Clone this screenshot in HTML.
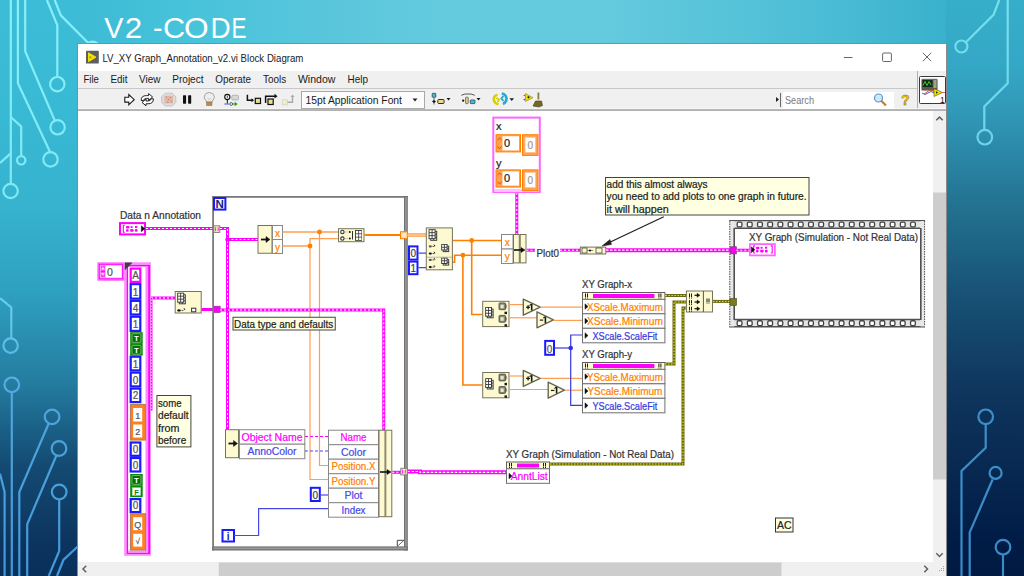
<!DOCTYPE html>
<html><head><meta charset="utf-8">
<style>
html,body{margin:0;padding:0;width:1024px;height:576px;overflow:hidden;background:#0c3460;}
svg{display:block;font-family:"Liberation Sans",sans-serif;}
</style></head>
<body>
<svg width="1024" height="576" viewBox="0 0 1024 576">
<defs>
<linearGradient id="gTop" x1="78" y1="0" x2="946" y2="0" gradientUnits="userSpaceOnUse">
<stop offset="0" stop-color="rgb(61,187,213)"/>
<stop offset="0.12" stop-color="rgb(70,195,218)"/>
<stop offset="0.294" stop-color="rgb(90,198,220)"/>
<stop offset="0.432" stop-color="rgb(100,203,222)"/>
<stop offset="0.605" stop-color="rgb(100,202,222)"/>
<stop offset="0.778" stop-color="rgb(84,194,216)"/>
<stop offset="0.893" stop-color="rgb(72,186,212)"/>
<stop offset="1" stop-color="rgb(57,177,204)"/>
</linearGradient>
<linearGradient id="gLeft" x1="0" y1="0" x2="0" y2="576" gradientUnits="userSpaceOnUse">
<stop offset="0" stop-color="rgb(60,188,215)"/>
<stop offset="0.1875" stop-color="rgb(56,185,212)"/>
<stop offset="0.365" stop-color="rgb(54,178,206)"/>
<stop offset="0.509" stop-color="rgb(46,160,192)"/>
<stop offset="0.665" stop-color="rgb(36,124,160)"/>
<stop offset="0.804" stop-color="rgb(20,75,115)"/>
<stop offset="0.943" stop-color="rgb(12,52,94)"/>
<stop offset="1" stop-color="rgb(10,48,90)"/>
</linearGradient>
<linearGradient id="gRight" x1="0" y1="0" x2="0" y2="576" gradientUnits="userSpaceOnUse">
<stop offset="0" stop-color="rgb(54,174,202)"/>
<stop offset="0.11" stop-color="rgb(52,168,198)"/>
<stop offset="0.214" stop-color="rgb(48,148,180)"/>
<stop offset="0.352" stop-color="rgb(35,115,145)"/>
<stop offset="0.509" stop-color="rgb(24,82,118)"/>
<stop offset="0.665" stop-color="rgb(16,55,95)"/>
<stop offset="0.943" stop-color="rgb(0,28,70)"/>
<stop offset="1" stop-color="rgb(0,26,66)"/>
</linearGradient>
<linearGradient id="gLineL" x1="0" y1="0" x2="0" y2="576" gradientUnits="userSpaceOnUse">
<stop offset="0" stop-color="rgb(135,240,250)"/>
<stop offset="0.35" stop-color="rgb(125,232,245)"/>
<stop offset="0.55" stop-color="rgb(100,200,235)"/>
<stop offset="0.7" stop-color="rgb(80,165,222)"/>
<stop offset="1" stop-color="rgb(66,152,215)"/>
</linearGradient>
<linearGradient id="gLineR" x1="0" y1="0" x2="0" y2="576" gradientUnits="userSpaceOnUse">
<stop offset="0" stop-color="rgb(118,224,238)"/>
<stop offset="0.3" stop-color="rgb(105,210,232)"/>
<stop offset="0.7" stop-color="rgb(62,142,200)"/>
<stop offset="1" stop-color="rgb(58,138,198)"/>
</linearGradient>
<pattern id="pinkW" width="4" height="4" patternUnits="userSpaceOnUse">
<rect width="4" height="4" fill="#ff00ff"/>
</pattern>
</defs>

<!-- background -->
<rect x="940" y="0" width="84" height="576" fill="url(#gRight)"/>
<rect x="0" y="0" width="82" height="576" fill="url(#gLeft)"/>
<rect x="78" y="0" width="868" height="50" fill="url(#gTop)"/>

<!-- circuit lines left -->
<g fill="none" stroke="url(#gLineL)" stroke-width="2.2">
<path d="M10.8,0 V183.7"/>
<circle cx="10.6" cy="191" r="7.2"/>
<path d="M17.9,0 V83.3 L50.3,152.5"/>
<circle cx="50.5" cy="159.4" r="7.2"/>
<path d="M25.2,0 V51.2 L54.7,120.4"/>
<circle cx="57.6" cy="127.3" r="7.2"/>
<path d="M46.9,0 L57.3,25.2 V77"/>
<circle cx="57.3" cy="84.2" r="7.2"/>
<path d="M54.7,0 L60.8,15.3 L87.8,42.5"/>
<circle cx="92.6" cy="48.6" r="7"/>
<path d="M10.8,117 L21.2,126.5 V156"/>
<circle cx="21.2" cy="160.3" r="4.2"/>
<path d="M10.8,153.4 L0,163"/>
<path d="M0,298.2 L11.3,307.4 V338.3"/>
<circle cx="10.6" cy="345.6" r="7.2"/>
<circle cx="11.8" cy="384.8" r="7.3"/>
<path d="M11.8,392 V576"/>
<circle cx="52.1" cy="416.9" r="7.3"/>
<path d="M48.6,423.8 L19.3,492 V576"/>
<circle cx="59" cy="448.5" r="7.3"/>
<path d="M56.4,455.5 L27.2,524.2 V576"/>
<path d="M0,473.7 L4.6,492 V576"/>
<circle cx="59.2" cy="492" r="7.3"/>
<path d="M59.2,499.3 V551 L48.7,576"/>
<path d="M78,546.3 L63.4,560 L57,576"/>
</g>
<!-- circuit lines right -->
<g fill="none" stroke="url(#gLineR)" stroke-width="2.2">
<path d="M999.2,0 L993.5,14.8 L965.7,42.5"/>
<circle cx="961.4" cy="46.5" r="6"/>
<path d="M1007.7,0 V83.3 L984.3,106.5 V130"/>
<circle cx="984.8" cy="137.2" r="7.3"/>
<circle cx="985.7" cy="416.8" r="7.3"/>
<path d="M985.7,424.1 V447.7 L961.5,471 V576"/>
<circle cx="995.6" cy="472.9" r="6"/>
<path d="M992.6,479.5 L969.7,532.4 V576"/>
<circle cx="1003" cy="547.2" r="7.3"/>
<path d="M1003,554.5 V576"/>
</g>

<!-- title -->
<g fill="#ffffff" font-size="30">
<text transform="translate(104.17,37.8) scale(0.958,1)">V</text>
<text transform="translate(124.81,37.8) scale(1.045,1)">2</text>
<text transform="translate(152.97,37.8) scale(0.957,1)">-</text>
<text transform="translate(162.94,37.8) scale(1.020,1)">C</text>
<text transform="translate(184.09,37.8) scale(1.056,1)">O</text>
<text transform="translate(210.44,37.8) scale(0.930,1)">D</text>
<text transform="translate(231.40,37.8) scale(0.750,1)">E</text>
</g>

<!-- window -->
<rect x="77" y="44" width="870" height="532" fill="#ffffff"/>
<rect x="77.5" y="43.5" width="869" height="540" fill="none" stroke="#8a8a8a" stroke-width="1"/>
<!-- title bar -->
<rect x="86" y="50.8" width="12.8" height="12.8" rx="0.6" fill="#5e5e5e"/>
<path d="M88.5,52.8 L96,57.2 L88.5,61.6 Z" fill="#f4e000" stroke="#f4e000" stroke-width="1" stroke-linejoin="round"/>
<path d="M89.6,56 L91.6,57.2 L89.6,58.6Z" fill="#7a7a50"/>
<text x="102.4" y="62" font-size="11" fill="#1a1a1a" textLength="201" lengthAdjust="spacingAndGlyphs">LV_XY Graph_Annotation_v2.vi Block Diagram</text>
<path d="M844,57.5 H852.5" stroke="#555" stroke-width="0.9"/>
<rect x="882.6" y="53" width="8.8" height="8.5" rx="1" fill="none" stroke="#555" stroke-width="0.9"/>
<path d="M922.8,52.8 L931.2,61.2 M931.2,52.8 L922.8,61.2" stroke="#555" stroke-width="0.9"/>
<!-- menu bar -->
<rect x="78" y="71" width="868" height="17" fill="#f0f0f0"/>
<g font-size="11" fill="#1a1a1a">
<text x="83.4" y="83" textLength="15.5" lengthAdjust="spacingAndGlyphs">File</text>
<text x="110.4" y="83" textLength="17" lengthAdjust="spacingAndGlyphs">Edit</text>
<text x="139.1" y="83" textLength="21.4" lengthAdjust="spacingAndGlyphs">View</text>
<text x="172.2" y="83" textLength="31.4" lengthAdjust="spacingAndGlyphs">Project</text>
<text x="215.3" y="83" textLength="35.7" lengthAdjust="spacingAndGlyphs">Operate</text>
<text x="263" y="83" textLength="23.2" lengthAdjust="spacingAndGlyphs">Tools</text>
<text x="297.9" y="83" textLength="37.5" lengthAdjust="spacingAndGlyphs">Window</text>
<text x="347.5" y="83" textLength="20.5" lengthAdjust="spacingAndGlyphs">Help</text>
</g>
<!-- toolbar -->
<rect x="78" y="88" width="840" height="22" fill="#f0f0f0"/>
<path d="M78,88.5 H918" stroke="#c8c8c8"/>
<rect x="918" y="71" width="28" height="39" fill="#f0f0f0"/>
<path d="M917.5,71 V110" stroke="#b0b0b0"/>
<rect x="78" y="108" width="868" height="1" fill="#f6f6f6"/>
<rect x="78" y="109.1" width="868" height="1.9" fill="#b2b2b2"/>


<!-- toolbar icons -->
<g>
<path d="M124.8,97.3 H128.8 V94.6 L134.2,99.7 L128.8,104.8 V102.1 H124.8 Z" fill="#fff" stroke="#1a1a1a" stroke-width="1.1" stroke-linejoin="miter"/>
<path d="M141.2,100.5 Q141,95.6 146.5,95.6 H148.6 V93.6 L152.6,97 L148.6,100.4 V98.4 H146.6 Q143.8,98.4 143.6,100.5 Z" fill="#fff" stroke="#1a1a1a" stroke-width="0.95" stroke-linejoin="round"/>
<path d="M153.4,98.8 Q153.6,103.8 148,103.8 H146 V105.8 L142,102.4 L146,99 V101 H148 Q150.8,101 151,98.8 Z" fill="#fff" stroke="#1a1a1a" stroke-width="0.95" stroke-linejoin="round"/>
<path d="M165.3,93.2 H172.2 L175.8,96.8 V102.4 L172.2,106 H165.3 L161.7,102.4 V96.8 Z" fill="#dcdcdc" stroke="#c4c4c4" stroke-width="1"/>
<rect x="164.5" y="95.8" width="8.6" height="7.6" fill="#e0b8a0"/>
<g fill="#e050e0"><circle cx="166.5" cy="97" r="0.6"/><circle cx="170.5" cy="97.5" r="0.6"/><circle cx="168.5" cy="99.6" r="0.6"/><circle cx="171.3" cy="101.6" r="0.6"/><circle cx="167.8" cy="102.3" r="0.6"/></g>
<rect x="183" y="95.2" width="3.1" height="8.5" rx="0.6" fill="#111"/>
<rect x="188.1" y="95.2" width="3.1" height="8.5" rx="0.6" fill="#111"/>
<path d="M206.3,101 Q204,99 204.3,96.3 Q205,92.6 209.3,92.5 Q213.6,92.6 214.3,96.3 Q214.6,99 212.3,101 V102 H206.3 Z" fill="#eeeeee" stroke="#9a9a9a" stroke-width="0.9"/>
<path d="M207.5,98 L209.3,100 L211,98" stroke="#b0b0b0" stroke-width="0.6" fill="none"/>
<rect x="206.6" y="102" width="5.4" height="3.6" fill="#b88a58" stroke="#8a6a40" stroke-width="0.5"/>
<circle cx="227.3" cy="97" r="2.6" fill="#fff" stroke="#111" stroke-width="1.1"/>
<path d="M227.3,95.6 V98.2" stroke="#111" stroke-width="0.8"/>
<rect x="231.8" y="95.3" width="6.6" height="4.6" rx="0.8" fill="#d8d8d8" stroke="#a0a0a0" stroke-width="0.7"/>
<path d="M227.3,99.6 V103.6" stroke="#111" stroke-width="1"/>
<path d="M224.3,104 H229" stroke="#3a5ae8" stroke-width="1"/>
<circle cx="231.2" cy="104" r="1.4" fill="#fff" stroke="#333" stroke-width="0.8"/>
<path d="M234.7,101.8 L237.6,104 L234.7,106.2Z" fill="#1aa01a"/>
<path d="M233,104 H235" stroke="#1aa01a" stroke-width="1"/>
<path d="M247.4,94.8 V100.3 H252.8" stroke="#111" stroke-width="1.5" fill="none"/>
<path d="M251.5,98.3 L254,100.3 L251.5,102.3Z" fill="#111"/>
<rect x="255.3" y="98.3" width="5.2" height="5.2" fill="#e8e090" stroke="#111" stroke-width="1.2"/>
<path d="M265.6,103 V96.2 H275" stroke="#111" stroke-width="1.5" fill="none"/>
<path d="M274.5,93.8 L277.5,96.2 L274.5,98.6Z" fill="#111"/>
<rect x="268" y="99" width="5.2" height="5.5" fill="#e8e090" stroke="#111" stroke-width="1.2"/>
<rect x="282.3" y="99.8" width="5" height="5" fill="#eeeed0" stroke="#d4d4b8" stroke-width="0.8"/>
<path d="M287.6,102.3 H292.5 V96.3" stroke="#a8a8a8" stroke-width="1.4" fill="none"/>
<path d="M290.5,97 L292.5,94.5 L294.5,97Z" fill="#a8a8a8"/>
</g>
<!-- font dropdown -->
<rect x="301.5" y="91.5" width="123" height="17" fill="#fcfcfc" stroke="#a8a8a8"/>
<text x="305.5" y="104" font-size="11" fill="#1a1a1a" textLength="96.5" lengthAdjust="spacingAndGlyphs">15pt Application Font</text>
<path d="M412.5,98.5 L417.5,98.5 L415,101.5Z" fill="#222"/>
<!-- align etc -->
<g>
<rect x="432.2" y="93.3" width="3.6" height="4" rx="0.6" fill="#30c0e8" stroke="#404040" stroke-width="0.8"/>
<path d="M434,98 V104.5" stroke="#222" stroke-width="0.7"/>
<path d="M432,101.5 L434,100 L436,101.5 L434,103Z" fill="#111"/>
<rect x="437.8" y="99.5" width="6.3" height="4" rx="1" fill="#e8dc90" stroke="#2a2a2a" stroke-width="1"/>
<path d="M446.5,98 L450.5,98 L448.5,100.5Z" fill="#1a1a1a"/>
<path d="M461.3,95.3 Q465,93.5 468,94 Q471,93.5 474.8,95.3" stroke="#444" stroke-width="0.9" fill="none"/>
<circle cx="463.2" cy="100.7" r="1.1" fill="#111"/>
<rect x="465.6" y="97.2" width="2.6" height="6.4" rx="0.6" fill="#e8dc80" stroke="#555" stroke-width="0.8"/>
<rect x="470.3" y="100" width="4.7" height="3.6" rx="0.6" fill="#30c0e8" stroke="#404040" stroke-width="0.8"/>
<path d="M476.5,98 L480.5,98 L478.5,100.5Z" fill="#1a1a1a"/>
<path d="M497.5,94.8 Q493.5,96 493.8,99.5 Q494.2,103.5 498.5,104.2" stroke="#d8d000" stroke-width="2.6" fill="none"/>
<path d="M496.5,97.8 L499,100 L497.5,102" stroke="#d8d000" stroke-width="1.8" fill="none"/>
<path d="M501.8,93.5 Q506.2,94.5 506.5,98.5 Q506.5,102.5 503,104" stroke="#2aa8d0" stroke-width="2.6" fill="none"/>
<path d="M503.5,96 L501.3,98.5 L503.5,101" stroke="#2aa8d0" stroke-width="1.8" fill="none"/>
<path d="M509.5,98.3 L514,98.3 L511.75,101Z" fill="#1a1a1a"/>
<path d="M525.5,93.5 L533,97.7 L525.5,101.5Z" fill="#e8dc10" stroke="#908800" stroke-width="0.6"/>
<circle cx="528.5" cy="97.3" r="1" fill="#111"/>
<circle cx="524.3" cy="95.5" r="0.8" fill="#e04020"/>
<circle cx="524.3" cy="99.6" r="0.8" fill="#4040e0"/>
<rect x="537.5" y="92.5" width="1.8" height="7" fill="#908040"/>
<path d="M533,106 L535.5,101 L541.5,101 L542.5,105.5 L539,107 Z" fill="#706a20" stroke="#4a3a20" stroke-width="0.6"/>
</g>
<!-- search -->
<path d="M776,97 L779,99.5 L776,102Z" fill="#222"/>
<path d="M780.5,93 V107" stroke="#666" stroke-width="1"/>
<rect x="783" y="92" width="111" height="17" fill="#ffffff"/>
<text x="785" y="104" font-size="11" fill="#7a7a7a" textLength="29" lengthAdjust="spacingAndGlyphs">Search</text>
<circle cx="878.5" cy="98" r="4" fill="#cfe8f8" stroke="#5a9ac8" stroke-width="1.2"/>
<path d="M881,100.5 L886,105.5" stroke="#c08030" stroke-width="2.2"/>
<text x="901" y="105" font-size="14" font-weight="bold" fill="#e8d000" stroke="#806000" stroke-width="0.4">?</text>
<!-- vi icon -->
<rect x="919.5" y="76.5" width="26" height="27" rx="1" fill="#ffffff" stroke="#3a3a3a" stroke-width="1"/>
<rect x="921.5" y="79" width="16" height="11.5" rx="1" fill="#5a5a50" stroke="#9a9a90" stroke-width="0.6"/>
<rect x="922.5" y="80" width="10" height="7" fill="#1a2a1a"/>
<path d="M923,85.5 L925,81.5 L927,85.5 L929,81.5 L931,85" stroke="#30e030" stroke-width="0.9" fill="none"/>
<rect x="933.5" y="80" width="3" height="8" fill="#a0a090"/>
<path d="M922,93 Q925,96 928,93 T934,93" stroke="#3050c0" stroke-width="0.9" fill="none"/>
<path d="M924,94 L930,90 L936,92" stroke="#e04020" stroke-width="0.9" fill="none"/>
<path d="M934,88.5 L942.5,92.5 L934,96.5Z" fill="#f0e000" stroke="#505000" stroke-width="0.6"/>
<path d="M936,91.2 L938,92.5 L936,93.8Z" fill="#222"/>
<path d="M942,92.5 H945" stroke="#e04040" stroke-width="0.8"/>
<text x="940" y="102.5" font-size="8.5" fill="#111">1</text>

<!-- vertical scrollbar -->
<rect x="933" y="111" width="13" height="451" fill="#f0f0f0"/>
<rect x="933" y="192.5" width="13" height="287" fill="#cdcdcd"/>
<path d="M936.3,120.3 L939.5,117.1 L942.7,120.3" stroke="#606060" stroke-width="1.5" fill="none"/>
<path d="M936.3,553.3 L939.5,556.5 L942.7,553.3" stroke="#606060" stroke-width="1.5" fill="none"/>
<!-- horizontal scrollbar -->
<rect x="78" y="562" width="868" height="14" fill="#f0f0f0"/>
<rect x="218.75" y="562.5" width="562.75" height="13.5" fill="#cdcdcd"/>
<path d="M86.2,565.8 L83,569 L86.2,572.2" stroke="#606060" stroke-width="1.5" fill="none"/>
<path d="M924.3,565.8 L927.5,569 L924.3,572.2" stroke="#606060" stroke-width="1.5" fill="none"/>
<g fill="#a0a0a0"><rect x="943" y="566" width="1" height="1"/><rect x="941" y="568" width="1" height="1"/><rect x="943" y="568" width="1" height="1"/><rect x="939" y="570" width="1" height="1"/><rect x="941" y="570" width="1" height="1"/><rect x="943" y="570" width="1" height="1"/></g>

<g id="diagram">
<rect x="97.3" y="262.3" width="27" height="18.5" fill="#ff70ff" />
<rect x="98.8" y="263.8" width="24" height="15.5" fill="#ff00ff" />
<rect x="99.8" y="264.8" width="22.2" height="13.5" fill="#ffb0ff" />
<rect x="105.8" y="265.8" width="15.7" height="11.5" fill="#ffffff" />
<rect x="100.8" y="265.8" width="4.2" height="11.5" fill="#ff40ff" />
<path d="M101.5,269.3 L102.9,267.3 L104.3,269.3Z" stroke="#ffffff" stroke-width="0.4" fill="#ffffff" />
<path d="M101.5,273.3 L102.9,275.3 L104.3,273.3Z" stroke="#ffffff" stroke-width="0.4" fill="#ffffff" />
<rect x="100.8" y="271" width="4.2" height="0.8" fill="#ff00ff" />
<text x="107" y="275.8" font-size="10.5" fill="#555"  stroke="#555" stroke-width="0.22">0</text>
<rect x="124.2" y="262.3" width="26.8" height="293.5" fill="#ff8cff" />
<rect x="126.8" y="265" width="23.2" height="289" fill="#ff00ff" />
<rect x="128.1" y="266.5" width="20" height="286" fill="#ffffff" />
<rect x="145.5" y="266.5" width="2.6" height="286" fill="#ff8cff" />
<rect x="128.1" y="550.5" width="20" height="2" fill="#ff8cff" />
<path d="M125,262.8 L132,262.8 L125,269.8Z" stroke="#404040" stroke-width="0.5" fill="#404040" />
<rect x="130.7" y="268.6" width="9.6" height="13.3" fill="#ffffff" stroke="#ff00ff" stroke-width="2.2" />
<text x="135.5" y="279.2" font-size="10" fill="#555" text-anchor="middle"  stroke="#555" stroke-width="0.22">A</text>
<rect x="130.7" y="284.1" width="9.6" height="14.55" fill="#ffffff" stroke="#1a1aff" stroke-width="2.2" />
<text x="135.5" y="295.95" font-size="10" fill="#555" text-anchor="middle"  stroke="#555" stroke-width="0.22">1</text>
<rect x="130.7" y="300.85" width="9.6" height="13.650000000000023" fill="#ffffff" stroke="#1a1aff" stroke-width="2.2" />
<text x="135.5" y="311.8" font-size="10" fill="#555" text-anchor="middle"  stroke="#555" stroke-width="0.22">4</text>
<rect x="130.7" y="316.70000000000005" width="9.6" height="14.199999999999978" fill="#ffffff" stroke="#1a1aff" stroke-width="2.2" />
<text x="135.5" y="328.2" font-size="10" fill="#555" text-anchor="middle"  stroke="#555" stroke-width="0.22">1</text>
<rect x="130.2" y="332.2" width="12.5" height="11.7" fill="#0b860b" />
<rect x="132.0" y="333.7" width="8.9" height="8.7" fill="#067006" stroke="#90d090" stroke-width="0.7" rx="1"/>
<text x="136.45" y="341.29999999999995" font-size="8" fill="#ffffff" text-anchor="middle" font-weight="bold">T</text>
<rect x="130.2" y="343.9" width="12.5" height="11.7" fill="#0b860b" />
<rect x="132.0" y="345.4" width="8.9" height="8.7" fill="#067006" stroke="#90d090" stroke-width="0.7" rx="1"/>
<text x="136.45" y="352.99999999999994" font-size="8" fill="#ffffff" text-anchor="middle" font-weight="bold">T</text>
<rect x="130.7" y="356.70000000000005" width="9.6" height="13.699999999999978" fill="#ffffff" stroke="#1a1aff" stroke-width="2.2" />
<text x="135.5" y="367.7" font-size="10" fill="#555" text-anchor="middle"  stroke="#555" stroke-width="0.22">1</text>
<rect x="130.7" y="372.6" width="9.6" height="13.8" fill="#ffffff" stroke="#1a1aff" stroke-width="2.2" />
<text x="135.5" y="383.7" font-size="10" fill="#555" text-anchor="middle"  stroke="#555" stroke-width="0.22">0</text>
<rect x="130.7" y="388.6" width="9.6" height="13.49999999999999" fill="#ffffff" stroke="#1a1aff" stroke-width="2.2" />
<text x="135.5" y="399.4" font-size="10" fill="#555" text-anchor="middle"  stroke="#555" stroke-width="0.22">2</text>
<rect x="130.5" y="404.5" width="15" height="35.5" fill="#ff8020" stroke="#b08060" stroke-width="1.2" />
<rect x="133.2" y="408" width="9" height="13.5" fill="#ffffff" />
<text x="137.7" y="418.5" font-size="9" fill="#555" text-anchor="middle"  stroke="#555" stroke-width="0.22">1</text>
<rect x="133.2" y="424.5" width="9" height="13" fill="#ffffff" />
<text x="137.7" y="434.8" font-size="9" fill="#555" text-anchor="middle"  stroke="#555" stroke-width="0.22">2</text>
<rect x="130.7" y="442.5" width="9.6" height="13.3" fill="#ffffff" stroke="#1a1aff" stroke-width="2.2" />
<text x="135.5" y="453.09999999999997" font-size="10" fill="#555" text-anchor="middle"  stroke="#555" stroke-width="0.22">0</text>
<rect x="130.7" y="458.0" width="9.6" height="13.500000000000046" fill="#ffffff" stroke="#1a1aff" stroke-width="2.2" />
<text x="135.5" y="468.8" font-size="10" fill="#555" text-anchor="middle"  stroke="#555" stroke-width="0.22">0</text>
<rect x="130.2" y="474" width="12.5" height="11.8" fill="#0b860b" />
<rect x="132.0" y="475.5" width="8.9" height="8.8" fill="#067006" stroke="#90d090" stroke-width="0.7" rx="1"/>
<text x="136.45" y="483.2" font-size="8" fill="#ffffff" text-anchor="middle" font-weight="bold">T</text>
<rect x="130.2" y="485.8" width="12.5" height="11.4" fill="#0b860b" />
<rect x="132.2" y="487.6" width="8.5" height="7.800000000000001" fill="#ffffff" stroke="#90d090" stroke-width="0.5" />
<text x="136.45" y="494.8" font-size="7.5" fill="#0b860b" text-anchor="middle" font-weight="bold">F</text>
<rect x="130.7" y="499.1" width="9.6" height="13.000000000000046" fill="#ffffff" stroke="#1a1aff" stroke-width="2.2" />
<text x="135.5" y="509.40000000000003" font-size="10" fill="#555" text-anchor="middle"  stroke="#555" stroke-width="0.22">0</text>
<rect x="130.5" y="513.8" width="15" height="36.2" fill="#ff8020" stroke="#b08060" stroke-width="1.2" />
<rect x="133.2" y="517.2" width="9" height="13" fill="#ffffff" />
<text x="137.7" y="528" font-size="9" fill="#555" text-anchor="middle"  stroke="#555" stroke-width="0.22">Q</text>
<rect x="133.2" y="533.8" width="9" height="12.8" fill="#ffffff" />
<text x="137.7" y="544" font-size="8" fill="#555" text-anchor="middle"  stroke="#555" stroke-width="0.22">&#8730;</text>
<path d="M151,298 H175" stroke="#ff00ff" stroke-width="3" fill="none" />
<path d="M151,298 H175" stroke="#ffffff" stroke-width="1" fill="none" stroke-dasharray="2 2"/>
<rect x="150" y="297" width="3" height="113.5" fill="#ff8cff" />
<path d="M151.5,298 V410.5" stroke="#ff00ff" stroke-width="1.2" fill="none" stroke-dasharray="1.5 1.5"/>
<rect x="175.2" y="291.5" width="26" height="21.5" fill="#fdfad2" stroke="#74745c" stroke-width="1" />
<rect x="178.79999999999998" y="294.3" width="7.0" height="10.0" fill="#3a3a3a" />
<rect x="179.7" y="295.2" width="2.1" height="2.1" fill="#ffffff" />
<rect x="182.7" y="295.2" width="2.1" height="2.1" fill="#ffffff" />
<rect x="179.7" y="298.2" width="2.1" height="2.1" fill="#ffffff" />
<rect x="182.7" y="298.2" width="2.1" height="2.1" fill="#ffffff" />
<rect x="179.7" y="301.2" width="2.1" height="2.1" fill="#ffffff" />
<rect x="182.7" y="301.2" width="2.1" height="2.1" fill="#ffffff" />
<rect x="177.2" y="292.7" width="7.0" height="10.0" fill="#3a3a3a" />
<rect x="178.1" y="293.59999999999997" width="2.1" height="2.1" fill="#ffffff" />
<rect x="181.1" y="293.59999999999997" width="2.1" height="2.1" fill="#ffffff" />
<rect x="178.1" y="296.59999999999997" width="2.1" height="2.1" fill="#ffffff" />
<rect x="181.1" y="296.59999999999997" width="2.1" height="2.1" fill="#ffffff" />
<rect x="178.1" y="299.59999999999997" width="2.1" height="2.1" fill="#ffffff" />
<rect x="181.1" y="299.59999999999997" width="2.1" height="2.1" fill="#ffffff" />
<ellipse cx="179" cy="310.4" rx="1.7" ry="1.2" fill="#111"/>
<path d="M181.5,310.4 H183.5" stroke="#333" stroke-width="0.8" fill="none" />
<path d="M184,308.2 L185,310" stroke="#222" stroke-width="1" fill="none" />
<rect x="191.6" y="308.2" width="4.2" height="3.6" fill="#ffffff" stroke="#333" stroke-width="1" />
<path d="M201.5,309.5 H214" stroke="#ff00ff" stroke-width="3" fill="none" />
<rect x="213.8" y="306.2" width="6.4" height="6.4" fill="#ff00ff" stroke="#7a3a7a" stroke-width="0.6" />
<rect x="156.9" y="395.5" width="34" height="51.4" fill="#ffffe1" stroke="#444" stroke-width="1" />
<text x="158.0" y="406.5" font-size="10.5" fill="#222" textLength="23.5" lengthAdjust="spacingAndGlyphs"  stroke="#222" stroke-width="0.22">some</text>
<text x="158.0" y="419.0" font-size="10.5" fill="#222" textLength="30.5" lengthAdjust="spacingAndGlyphs"  stroke="#222" stroke-width="0.22">default</text>
<text x="158.0" y="431.5" font-size="10.5" fill="#222" textLength="21.5" lengthAdjust="spacingAndGlyphs"  stroke="#222" stroke-width="0.22">from</text>
<text x="158.0" y="444.0" font-size="10.5" fill="#222" textLength="28.2" lengthAdjust="spacingAndGlyphs"  stroke="#222" stroke-width="0.22">before</text>
<text x="120" y="218.7" font-size="11" fill="#333333" textLength="81" lengthAdjust="spacingAndGlyphs"  stroke="#333333" stroke-width="0.22">Data n Annotation</text>
<rect x="120" y="223.1" width="25" height="11.3" fill="#ffffff" stroke="#ff00ff" stroke-width="2" />
<path d="M124.8,225.2 H123.3 V232.3 H124.8" stroke="#ff00ff" stroke-width="1.1" fill="none" />
<g fill="#ff00ff">
<rect x="126" y="226.0" width="3.4" height="2.6" rx="0.8"/><rect x="126" y="229.3" width="2.6" height="2.4" rx="0.8"/>
<rect x="130.6" y="226.2" width="2" height="1.8"/><rect x="130.2" y="229.1" width="3.4" height="2.6" rx="0.8"/>
<rect x="135" y="226.0" width="2.2" height="2"/><rect x="134.8" y="229.0" width="2.8" height="2.8" rx="1"/>
</g>
<path d="M141.3,225.8 L144.8,228.75 L141.3,231.7Z" stroke="#111" stroke-width="0.5" fill="#111" />
<path d="M146,228.5 H214" stroke="#ff00ff" stroke-width="3" fill="none" />
<path d="M146,228.5 H214" stroke="#ffffff" stroke-width="1" fill="none" stroke-dasharray="2 2"/>
<rect x="212.2" y="196" width="1.8" height="354.5" fill="#7a7a7a" />
<rect x="212.2" y="196" width="195.6" height="1.8" fill="#7a7a7a" />
<rect x="404" y="196" width="3.8" height="354.5" fill="#707070" />
<rect x="405.1" y="197" width="1.6" height="352.5" fill="#9a9a9a" />
<rect x="212.2" y="546.4" width="195.6" height="4.1" fill="#707070" />
<rect x="213.5" y="547.5" width="193.2" height="1.7" fill="#9a9a9a" />
<path d="M397.3,546.4 V540.3 H404" stroke="#333" stroke-width="0.9" fill="none" />
<path d="M397.5,546.2 L403.8,540.5" stroke="#444" stroke-width="0.8" fill="none" />
<rect x="214" y="198" width="11.4" height="11.6" fill="#fdfad2" stroke="#1a1aff" stroke-width="2" />
<text x="219.7" y="208.3" font-size="11.5" fill="#1a1a90" text-anchor="middle" font-weight="bold">N</text>
<rect x="213.8" y="225.8" width="6" height="6.6" fill="#f4eeb8" stroke="#777" stroke-width="0.9" />
<path d="M215.6,227.3 V231 M218.2,227.3 V231" stroke="#ff00ff" stroke-width="0.9" fill="none" />
<path d="M220,228.5 H227.5 V430" stroke="#ff00ff" stroke-width="3" fill="none" />
<path d="M220,228.5 H227.5 V430" stroke="#ffffff" stroke-width="1" fill="none" stroke-dasharray="2 2"/>
<path d="M227.5,239.5 H258" stroke="#ff00ff" stroke-width="3" fill="none" />
<path d="M227.5,239.5 H258" stroke="#ffffff" stroke-width="1" fill="none" stroke-dasharray="2 2"/>
<circle cx="227.5" cy="239.5" r="2.2" fill="#ff00ff"/>
<rect x="258.0" y="225.5" width="14" height="27.75" fill="#fdfad2" stroke="#74745c" stroke-width="1" />
<path d="M261,239.5 H267" stroke="#111" stroke-width="1.8" fill="none" />
<path d="M266,236.5 L270,239.5 L266,242.5Z" stroke="#111" stroke-width="0.5" fill="#111" />
<rect x="272.5" y="225.5" width="10" height="14" fill="#ffffff" stroke="#888" stroke-width="1" />
<rect x="272.5" y="239.5" width="10" height="14" fill="#ffffff" stroke="#888" stroke-width="1" />
<text x="277.5" y="236.5" font-size="10" fill="#ff8000" text-anchor="middle"  stroke="#ff8000" stroke-width="0.22">x</text>
<text x="277.5" y="250.5" font-size="10" fill="#ff8000" text-anchor="middle"  stroke="#ff8000" stroke-width="0.22">y</text>
<path d="M282.5,232 H338" stroke="#ff9e50" stroke-width="1.3" fill="none" />
<path d="M282.5,246 H310 V238.6 H338" stroke="#ff9e50" stroke-width="1.3" fill="none" />
<path d="M310,246 V479.5 H328" stroke="#ff9e50" stroke-width="1.2" fill="none" />
<path d="M319.5,232 V465.5 H328" stroke="#ff9e50" stroke-width="1.2" fill="none" />
<circle cx="310" cy="246" r="2.4" fill="#ff8000"/>
<circle cx="319.5" cy="232" r="2.4" fill="#ff8000"/>
<rect x="338.5" y="228.7" width="25.5" height="13" fill="#fdfad2" stroke="#74745c" stroke-width="1" />
<circle cx="342.4" cy="232" r="1.7" fill="#ffffff" stroke="#333" stroke-width="1.1"/>
<path d="M345,232 H348" stroke="#aaa" stroke-width="0.7" fill="none" />
<circle cx="349.8" cy="232" r="1" fill="#111"/>
<circle cx="342.4" cy="238.6" r="1.7" fill="#ffffff" stroke="#333" stroke-width="1.1"/>
<path d="M345,238.6 H348" stroke="#aaa" stroke-width="0.7" fill="none" />
<circle cx="349.8" cy="238.6" r="1" fill="#111"/>
<path d="M352.5,231 V239.5" stroke="#333" stroke-width="1" fill="none" />
<rect x="355" y="230" width="7" height="10.8" fill="#3a3a3a" />
<rect x="355.9" y="230.9" width="2.4" height="2.5" fill="#ffffff" />
<rect x="359.09999999999997" y="230.9" width="2.4" height="2.5" fill="#ffffff" />
<rect x="355.9" y="234.20000000000002" width="2.4" height="2.5" fill="#ffffff" />
<rect x="359.09999999999997" y="234.20000000000002" width="2.4" height="2.5" fill="#ffffff" />
<rect x="355.9" y="237.5" width="2.4" height="2.5" fill="#ffffff" />
<rect x="359.09999999999997" y="237.5" width="2.4" height="2.5" fill="#ffffff" />
<path d="M364.5,235 H401" stroke="#ff8000" stroke-width="2.2" fill="none" />
<rect x="400.5" y="231.7" width="7" height="7" fill="#f8d8a0" stroke="#ff8000" stroke-width="1" />
<path d="M403,233.5 V237 M405,233.5 V237" stroke="#fff" stroke-width="0.8" fill="none" />
<path d="M220,310 H383.75 V430" stroke="#ff00ff" stroke-width="3" fill="none" />
<path d="M220,310 H383.75 V430" stroke="#ffffff" stroke-width="1" fill="none" stroke-dasharray="2 2"/>
<rect x="233.0" y="317.25" width="102.25" height="12.75" fill="#ffffe1" stroke="#444" stroke-width="1" />
<text x="234.1" y="327.5" font-size="11" fill="#222" textLength="99" lengthAdjust="spacingAndGlyphs"  stroke="#222" stroke-width="0.22">Data type and defaults</text>
<rect x="225.5" y="429.7" width="13" height="28" fill="#fdfad2" stroke="#74745c" stroke-width="1" />
<path d="M228.5,443.5 H234" stroke="#111" stroke-width="1.8" fill="none" />
<path d="M233.5,440.5 L237.5,443.5 L233.5,446.5Z" stroke="#111" stroke-width="0.5" fill="#111" />
<rect x="239.5" y="429.7" width="65.3" height="14.5" fill="#ffffff" stroke="#888" stroke-width="1" />
<rect x="239.5" y="444.2" width="65.3" height="14.5" fill="#ffffff" stroke="#888" stroke-width="1" />
<text x="272" y="440.5" font-size="10.5" fill="#ff00ff" textLength="61" lengthAdjust="spacingAndGlyphs" text-anchor="middle"  stroke="#ff00ff" stroke-width="0.22">Object Name</text>
<text x="272" y="455" font-size="10.5" fill="#4848e8" textLength="49" lengthAdjust="spacingAndGlyphs" text-anchor="middle"  stroke="#4848e8" stroke-width="0.22">AnnoColor</text>
<path d="M305,436.5 H328" stroke="#ff00ff" stroke-width="1.2" fill="none" stroke-dasharray="3 2"/>
<path d="M305,451 H328" stroke="#4848e8" stroke-width="1.2" fill="none" stroke-dasharray="3 2"/>
<rect x="328.5" y="430.2" width="50" height="14.5" fill="#ffffff" stroke="#888" stroke-width="1" />
<text x="353.5" y="441.2" font-size="10.5" fill="#ff00ff" textLength="26" lengthAdjust="spacingAndGlyphs" text-anchor="middle"  stroke="#ff00ff" stroke-width="0.22">Name</text>
<rect x="328.5" y="444.7" width="50" height="14.5" fill="#ffffff" stroke="#888" stroke-width="1" />
<text x="353.5" y="455.7" font-size="10.5" fill="#4848e8" textLength="25" lengthAdjust="spacingAndGlyphs" text-anchor="middle"  stroke="#4848e8" stroke-width="0.22">Color</text>
<rect x="328.5" y="459.2" width="50" height="14.5" fill="#ffffff" stroke="#888" stroke-width="1" />
<text x="353.5" y="470.2" font-size="10.5" fill="#ff8000" textLength="44" lengthAdjust="spacingAndGlyphs" text-anchor="middle"  stroke="#ff8000" stroke-width="0.22">Position.X</text>
<rect x="328.5" y="473.7" width="50" height="14.5" fill="#ffffff" stroke="#888" stroke-width="1" />
<text x="353.5" y="484.7" font-size="10.5" fill="#ff8000" textLength="44" lengthAdjust="spacingAndGlyphs" text-anchor="middle"  stroke="#ff8000" stroke-width="0.22">Position.Y</text>
<rect x="328.5" y="488.2" width="50" height="14.5" fill="#ffffff" stroke="#888" stroke-width="1" />
<text x="353.5" y="499.2" font-size="10.5" fill="#4848e8" textLength="18" lengthAdjust="spacingAndGlyphs" text-anchor="middle"  stroke="#4848e8" stroke-width="0.22">Plot</text>
<rect x="328.5" y="502.7" width="50" height="14.5" fill="#ffffff" stroke="#888" stroke-width="1" />
<text x="353.5" y="513.7" font-size="10.5" fill="#4848e8" textLength="24" lengthAdjust="spacingAndGlyphs" text-anchor="middle"  stroke="#4848e8" stroke-width="0.22">Index</text>
<rect x="379.0" y="430.2" width="6" height="86.5" fill="#fdfad2" stroke="#74745c" stroke-width="1" />
<rect x="385.8" y="430.2" width="6" height="86.5" fill="#fdfad2" stroke="#74745c" stroke-width="1" />
<path d="M380,472 H388" stroke="#111" stroke-width="1.6" fill="none" />
<path d="M387,469.5 L391,472 L387,474.5Z" stroke="#111" stroke-width="0.5" fill="#111" />
<rect x="310.8" y="487.8" width="9" height="13.2" fill="#ffffff" stroke="#1a1aff" stroke-width="2" />
<text x="315.3" y="498.8" font-size="10" fill="#444" text-anchor="middle"  stroke="#444" stroke-width="0.22">0</text>
<path d="M320.8,495 H328" stroke="#4848e8" stroke-width="1.2" fill="none" />
<rect x="222.5" y="530" width="11.5" height="11.5" fill="#ffffff" stroke="#1a1aff" stroke-width="2" />
<text x="228.2" y="539.5" font-size="10" fill="#1a1a90" text-anchor="middle" font-weight="bold">i</text>
<path d="M234,535.5 H258.6 V508.7 H328" stroke="#4848e8" stroke-width="1.2" fill="none" />
<path d="M392.3,472.3 H401" stroke="#ff00ff" stroke-width="3" fill="none" />
<path d="M392.3,472.3 H401" stroke="#ffffff" stroke-width="1" fill="none" stroke-dasharray="2 2"/>
<path d="M407.5,471.5 H420 V472.3 H506" stroke="#ff00ff" stroke-width="4" fill="none" />
<path d="M407.5,471.5 H420 V472.3 H506" stroke="#ffffff" stroke-width="1.2" fill="none" stroke-dasharray="2.5 1.5"/>
<rect x="400.8" y="468.3" width="6.5" height="6.6" fill="#f4eeb8" stroke="#777" stroke-width="0.9" />
<path d="M402.6,469.8 V473.5 M405.3,469.8 V473.5" stroke="#ff00ff" stroke-width="0.9" fill="none" />
<path d="M407.5,235 H426" stroke="#ff8000" stroke-width="3.2" fill="none" />
<path d="M407.5,235 H426" stroke="#ffffff" stroke-width="1" fill="none" />
<rect x="426.3" y="227.9" width="26.1" height="41.9" fill="#fdfad2" stroke="#74745c" stroke-width="1" />
<rect x="430.20000000000005" y="230.79999999999998" width="7.0" height="10.0" fill="#3a3a3a" />
<rect x="431.1" y="231.7" width="2.1" height="2.1" fill="#ffffff" />
<rect x="434.1" y="231.7" width="2.1" height="2.1" fill="#ffffff" />
<rect x="431.1" y="234.7" width="2.1" height="2.1" fill="#ffffff" />
<rect x="434.1" y="234.7" width="2.1" height="2.1" fill="#ffffff" />
<rect x="431.1" y="237.7" width="2.1" height="2.1" fill="#ffffff" />
<rect x="434.1" y="237.7" width="2.1" height="2.1" fill="#ffffff" />
<rect x="428.6" y="229.2" width="7.0" height="10.0" fill="#3a3a3a" />
<rect x="429.5" y="230.1" width="2.1" height="2.1" fill="#ffffff" />
<rect x="432.5" y="230.1" width="2.1" height="2.1" fill="#ffffff" />
<rect x="429.5" y="233.1" width="2.1" height="2.1" fill="#ffffff" />
<rect x="432.5" y="233.1" width="2.1" height="2.1" fill="#ffffff" />
<rect x="429.5" y="236.1" width="2.1" height="2.1" fill="#ffffff" />
<rect x="432.5" y="236.1" width="2.1" height="2.1" fill="#ffffff" />
<ellipse cx="430.3" cy="246.4" rx="1.6" ry="1.1" fill="#555"/>
<path d="M432.5,246.4 H434.5" stroke="#222" stroke-width="0.8" fill="none" />
<path d="M434,244.6 L435,246.1" stroke="#222" stroke-width="1" fill="none" />
<ellipse cx="430.3" cy="253.6" rx="1.6" ry="1.1" fill="#111"/>
<path d="M432.5,253.6 H434.5" stroke="#222" stroke-width="0.8" fill="none" />
<path d="M434,251.8 L435,253.3" stroke="#222" stroke-width="1" fill="none" />
<rect x="442.8" y="245.7" width="6.4" height="6.4" fill="#3a3a3a" />
<rect x="443.7" y="246.6" width="1.8000000000000003" height="1.8000000000000003" fill="#ffffff" />
<rect x="446.4" y="246.6" width="1.8000000000000003" height="1.8000000000000003" fill="#ffffff" />
<rect x="443.7" y="249.29999999999998" width="1.8000000000000003" height="1.8000000000000003" fill="#ffffff" />
<rect x="446.4" y="249.29999999999998" width="1.8000000000000003" height="1.8000000000000003" fill="#ffffff" />
<rect x="441.2" y="244.1" width="6.4" height="6.4" fill="#3a3a3a" />
<rect x="442.09999999999997" y="245.0" width="1.8000000000000003" height="1.8000000000000003" fill="#ffffff" />
<rect x="444.79999999999995" y="245.0" width="1.8000000000000003" height="1.8000000000000003" fill="#ffffff" />
<rect x="442.09999999999997" y="247.7" width="1.8000000000000003" height="1.8000000000000003" fill="#ffffff" />
<rect x="444.79999999999995" y="247.7" width="1.8000000000000003" height="1.8000000000000003" fill="#ffffff" />
<ellipse cx="430.3" cy="259.9" rx="1.6" ry="1.1" fill="#555"/>
<path d="M432.5,259.9 H434.5" stroke="#222" stroke-width="0.8" fill="none" />
<path d="M434,258.09999999999997 L435,259.59999999999997" stroke="#222" stroke-width="1" fill="none" />
<ellipse cx="430.3" cy="267.09999999999997" rx="1.6" ry="1.1" fill="#111"/>
<path d="M432.5,267.09999999999997 H434.5" stroke="#222" stroke-width="0.8" fill="none" />
<path d="M434,265.29999999999995 L435,266.79999999999995" stroke="#222" stroke-width="1" fill="none" />
<rect x="442.8" y="259.2" width="6.4" height="6.4" fill="#3a3a3a" />
<rect x="443.7" y="260.09999999999997" width="1.8000000000000003" height="1.8000000000000003" fill="#ffffff" />
<rect x="446.4" y="260.09999999999997" width="1.8000000000000003" height="1.8000000000000003" fill="#ffffff" />
<rect x="443.7" y="262.79999999999995" width="1.8000000000000003" height="1.8000000000000003" fill="#ffffff" />
<rect x="446.4" y="262.79999999999995" width="1.8000000000000003" height="1.8000000000000003" fill="#ffffff" />
<rect x="441.2" y="257.59999999999997" width="6.4" height="6.4" fill="#3a3a3a" />
<rect x="442.09999999999997" y="258.49999999999994" width="1.8000000000000003" height="1.8000000000000003" fill="#ffffff" />
<rect x="444.79999999999995" y="258.49999999999994" width="1.8000000000000003" height="1.8000000000000003" fill="#ffffff" />
<rect x="442.09999999999997" y="261.19999999999993" width="1.8000000000000003" height="1.8000000000000003" fill="#ffffff" />
<rect x="444.79999999999995" y="261.19999999999993" width="1.8000000000000003" height="1.8000000000000003" fill="#ffffff" />
<path d="M427,257.2 H452" stroke="#999" stroke-width="0.7" fill="none" />
<rect x="409" y="246.4" width="8.5" height="13.2" fill="#ffffff" stroke="#1a1aff" stroke-width="2" />
<text x="413.25" y="257.40000000000003" font-size="10" fill="#444" text-anchor="middle"  stroke="#444" stroke-width="0.22">0</text>
<rect x="409" y="261.6" width="8.5" height="12.6" fill="#ffffff" stroke="#1a1aff" stroke-width="2" />
<text x="413.25" y="272.00000000000006" font-size="10" fill="#444" text-anchor="middle"  stroke="#444" stroke-width="0.22">1</text>
<path d="M418.5,253.1 H426 M418.5,267.6 H426" stroke="#4848e8" stroke-width="1.2" fill="none" />
<path d="M452.9,240.5 H501" stroke="#ff8000" stroke-width="1.6" fill="none" />
<path d="M452.9,262.2 H454.6 V255.2 H501" stroke="#ff8000" stroke-width="1.6" fill="none" />
<path d="M471.7,240.5 V314.5 H482.2" stroke="#ff8000" stroke-width="1.6" fill="none" />
<path d="M462.9,255.2 V385 H482.2" stroke="#ff8000" stroke-width="1.6" fill="none" />
<circle cx="471.7" cy="240.5" r="2.4" fill="#ff8000"/>
<circle cx="462.9" cy="255.2" r="2.4" fill="#ff8000"/>
<rect x="501.5" y="234.5" width="11.5" height="14.5" fill="#ffffff" stroke="#888" stroke-width="1" />
<rect x="501.5" y="249" width="11.5" height="14.5" fill="#ffffff" stroke="#888" stroke-width="1" />
<text x="507.3" y="245.5" font-size="10" fill="#ff8000" text-anchor="middle"  stroke="#ff8000" stroke-width="0.22">x</text>
<text x="507.3" y="260" font-size="10" fill="#ff8000" text-anchor="middle"  stroke="#ff8000" stroke-width="0.22">y</text>
<rect x="513.5" y="234.5" width="5.8" height="28.4" fill="#fdfad2" stroke="#74745c" stroke-width="1" />
<rect x="520.2" y="234.5" width="5.8" height="28.4" fill="#fdfad2" stroke="#74745c" stroke-width="1" />
<path d="M514,250 H522" stroke="#111" stroke-width="1.6" fill="none" />
<path d="M521,247.5 L525,250 L521,252.5Z" stroke="#111" stroke-width="0.5" fill="#111" />
<rect x="493.3" y="117.6" width="46.5" height="74.5" fill="#ffffff" stroke="#ff66ff" stroke-width="2" />
<rect x="494.5" y="189" width="44" height="3" fill="#ffc0ff" />
<text x="496" y="130.3" font-size="11" fill="#222"  stroke="#222" stroke-width="0.22">x</text>
<text x="496" y="167" font-size="11" fill="#222"  stroke="#222" stroke-width="0.22">y</text>
<rect x="496" y="134.7" width="24.5" height="17.2" fill="#ffa050" stroke="#ff8000" stroke-width="1" />
<rect x="502.5" y="136.2" width="16.5" height="14.2" fill="#ffffff" />
<path d="M497.5,140.2 L499.5,137.7 L501.5,140.2 M497.5,146.39999999999998 L499.5,148.89999999999998 L501.5,146.39999999999998" stroke="#c05000" stroke-width="0.8" fill="none" />
<text x="504" y="147.2" font-size="11" fill="#222"  stroke="#222" stroke-width="0.22">0</text>
<rect x="522.5" y="134.7" width="15.5" height="20.7" fill="#ffa050" stroke="#ff8000" stroke-width="1" />
<rect x="525" y="137.2" width="10.5" height="15.2" fill="#ffffff" stroke="#ffc090" stroke-width="0.8" />
<text x="530.3" y="149.2" font-size="10" fill="#999" text-anchor="middle"  stroke="#999" stroke-width="0.22">0</text>
<rect x="496" y="169.9" width="24.5" height="17.2" fill="#ffa050" stroke="#ff8000" stroke-width="1" />
<rect x="502.5" y="171.4" width="16.5" height="14.2" fill="#ffffff" />
<path d="M497.5,175.4 L499.5,172.9 L501.5,175.4 M497.5,181.6 L499.5,184.1 L501.5,181.6" stroke="#c05000" stroke-width="0.8" fill="none" />
<text x="504" y="182.4" font-size="11" fill="#222"  stroke="#222" stroke-width="0.22">0</text>
<rect x="522.5" y="169.9" width="15.5" height="20.7" fill="#ffa050" stroke="#ff8000" stroke-width="1" />
<rect x="525" y="172.4" width="10.5" height="15.2" fill="#ffffff" stroke="#ffc090" stroke-width="0.8" />
<text x="530.3" y="184.4" font-size="10" fill="#999" text-anchor="middle"  stroke="#999" stroke-width="0.22">0</text>
<path d="M516.8,193 V234" stroke="#ff00ff" stroke-width="3" fill="none" />
<path d="M516.8,193 V234" stroke="#ffffff" stroke-width="1" fill="none" stroke-dasharray="2 2"/>
<rect x="729.25" y="220.6" width="195.75" height="7.700000000000017" fill="#e4e4e4" />
<path d="M729.25,220.6 H925" stroke="#505050" stroke-width="1.4" fill="none" />
<path d="M734.25,228.3 H920" stroke="#505050" stroke-width="1.4" fill="none" />
<rect x="737.15" y="222.04999999999998" width="4.8" height="4.8" fill="#ffffff" stroke="#404040" stroke-width="1.3" rx="1.4"/>
<rect x="747.35" y="222.04999999999998" width="4.8" height="4.8" fill="#ffffff" stroke="#404040" stroke-width="1.3" rx="1.4"/>
<rect x="757.5500000000001" y="222.04999999999998" width="4.8" height="4.8" fill="#ffffff" stroke="#404040" stroke-width="1.3" rx="1.4"/>
<rect x="767.7500000000001" y="222.04999999999998" width="4.8" height="4.8" fill="#ffffff" stroke="#404040" stroke-width="1.3" rx="1.4"/>
<rect x="777.9500000000002" y="222.04999999999998" width="4.8" height="4.8" fill="#ffffff" stroke="#404040" stroke-width="1.3" rx="1.4"/>
<rect x="788.1500000000002" y="222.04999999999998" width="4.8" height="4.8" fill="#ffffff" stroke="#404040" stroke-width="1.3" rx="1.4"/>
<rect x="798.3500000000003" y="222.04999999999998" width="4.8" height="4.8" fill="#ffffff" stroke="#404040" stroke-width="1.3" rx="1.4"/>
<rect x="808.5500000000003" y="222.04999999999998" width="4.8" height="4.8" fill="#ffffff" stroke="#404040" stroke-width="1.3" rx="1.4"/>
<rect x="818.7500000000003" y="222.04999999999998" width="4.8" height="4.8" fill="#ffffff" stroke="#404040" stroke-width="1.3" rx="1.4"/>
<rect x="828.9500000000004" y="222.04999999999998" width="4.8" height="4.8" fill="#ffffff" stroke="#404040" stroke-width="1.3" rx="1.4"/>
<rect x="839.1500000000004" y="222.04999999999998" width="4.8" height="4.8" fill="#ffffff" stroke="#404040" stroke-width="1.3" rx="1.4"/>
<rect x="849.3500000000005" y="222.04999999999998" width="4.8" height="4.8" fill="#ffffff" stroke="#404040" stroke-width="1.3" rx="1.4"/>
<rect x="859.5500000000005" y="222.04999999999998" width="4.8" height="4.8" fill="#ffffff" stroke="#404040" stroke-width="1.3" rx="1.4"/>
<rect x="869.7500000000006" y="222.04999999999998" width="4.8" height="4.8" fill="#ffffff" stroke="#404040" stroke-width="1.3" rx="1.4"/>
<rect x="879.9500000000006" y="222.04999999999998" width="4.8" height="4.8" fill="#ffffff" stroke="#404040" stroke-width="1.3" rx="1.4"/>
<rect x="890.1500000000007" y="222.04999999999998" width="4.8" height="4.8" fill="#ffffff" stroke="#404040" stroke-width="1.3" rx="1.4"/>
<rect x="900.3500000000007" y="222.04999999999998" width="4.8" height="4.8" fill="#ffffff" stroke="#404040" stroke-width="1.3" rx="1.4"/>
<rect x="910.5500000000008" y="222.04999999999998" width="4.8" height="4.8" fill="#ffffff" stroke="#404040" stroke-width="1.3" rx="1.4"/>
<rect x="729.25" y="319.5" width="195.75" height="7.300000000000011" fill="#e4e4e4" />
<path d="M729.25,326.8 H925" stroke="#505050" stroke-width="1.4" fill="none" />
<path d="M734.25,319.5 H920" stroke="#505050" stroke-width="1.4" fill="none" />
<rect x="737.15" y="320.75" width="4.8" height="4.8" fill="#ffffff" stroke="#404040" stroke-width="1.3" rx="1.4"/>
<rect x="747.35" y="320.75" width="4.8" height="4.8" fill="#ffffff" stroke="#404040" stroke-width="1.3" rx="1.4"/>
<rect x="757.5500000000001" y="320.75" width="4.8" height="4.8" fill="#ffffff" stroke="#404040" stroke-width="1.3" rx="1.4"/>
<rect x="767.7500000000001" y="320.75" width="4.8" height="4.8" fill="#ffffff" stroke="#404040" stroke-width="1.3" rx="1.4"/>
<rect x="777.9500000000002" y="320.75" width="4.8" height="4.8" fill="#ffffff" stroke="#404040" stroke-width="1.3" rx="1.4"/>
<rect x="788.1500000000002" y="320.75" width="4.8" height="4.8" fill="#ffffff" stroke="#404040" stroke-width="1.3" rx="1.4"/>
<rect x="798.3500000000003" y="320.75" width="4.8" height="4.8" fill="#ffffff" stroke="#404040" stroke-width="1.3" rx="1.4"/>
<rect x="808.5500000000003" y="320.75" width="4.8" height="4.8" fill="#ffffff" stroke="#404040" stroke-width="1.3" rx="1.4"/>
<rect x="818.7500000000003" y="320.75" width="4.8" height="4.8" fill="#ffffff" stroke="#404040" stroke-width="1.3" rx="1.4"/>
<rect x="828.9500000000004" y="320.75" width="4.8" height="4.8" fill="#ffffff" stroke="#404040" stroke-width="1.3" rx="1.4"/>
<rect x="839.1500000000004" y="320.75" width="4.8" height="4.8" fill="#ffffff" stroke="#404040" stroke-width="1.3" rx="1.4"/>
<rect x="849.3500000000005" y="320.75" width="4.8" height="4.8" fill="#ffffff" stroke="#404040" stroke-width="1.3" rx="1.4"/>
<rect x="859.5500000000005" y="320.75" width="4.8" height="4.8" fill="#ffffff" stroke="#404040" stroke-width="1.3" rx="1.4"/>
<rect x="869.7500000000006" y="320.75" width="4.8" height="4.8" fill="#ffffff" stroke="#404040" stroke-width="1.3" rx="1.4"/>
<rect x="879.9500000000006" y="320.75" width="4.8" height="4.8" fill="#ffffff" stroke="#404040" stroke-width="1.3" rx="1.4"/>
<rect x="890.1500000000007" y="320.75" width="4.8" height="4.8" fill="#ffffff" stroke="#404040" stroke-width="1.3" rx="1.4"/>
<rect x="900.3500000000007" y="320.75" width="4.8" height="4.8" fill="#ffffff" stroke="#404040" stroke-width="1.3" rx="1.4"/>
<rect x="910.5500000000008" y="320.75" width="4.8" height="4.8" fill="#ffffff" stroke="#404040" stroke-width="1.3" rx="1.4"/>
<rect x="729.3" y="221" width="5" height="105.5" fill="#e8e8e8" />
<path d="M729.8,221 V326.5" stroke="#505050" stroke-width="1" fill="none" stroke-dasharray="1.5 1"/>
<path d="M734.2,228 V320" stroke="#505050" stroke-width="1.6" fill="none" />
<rect x="920.5" y="221" width="4.5" height="105.5" fill="#e8e8e8" />
<path d="M924.6,221 V326.5" stroke="#505050" stroke-width="1" fill="none" stroke-dasharray="1.5 1"/>
<path d="M920.8,228 V320" stroke="#505050" stroke-width="1.6" fill="none" />
<text x="749" y="240.8" font-size="11" fill="#333333" textLength="169" lengthAdjust="spacingAndGlyphs"  stroke="#333333" stroke-width="0.22">XY Graph (Simulation - Not Real Data)</text>
<rect x="749.9" y="244.1" width="25" height="11.3" fill="#ffffff" stroke="#ff66ff" stroke-width="1.8" />
<path d="M770.7,245.89999999999998 H772.2 V253.0 H770.7" stroke="#ff00ff" stroke-width="1.1" fill="none" />
<g fill="#ff00ff">
<rect x="756" y="246.7" width="3.4" height="2.6" rx="0.8"/><rect x="756" y="250.0" width="2.6" height="2.4" rx="0.8"/>
<rect x="760.6" y="246.89999999999998" width="2" height="1.8"/><rect x="760.2" y="249.79999999999998" width="3.4" height="2.6" rx="0.8"/>
<rect x="765" y="246.7" width="2.2" height="2"/><rect x="764.8" y="249.7" width="2.8" height="2.8" rx="1"/>
</g>
<path d="M755,245.89999999999998 H753.7 V253.0 H755" stroke="#ff00ff" stroke-width="1.1" fill="none" />
<path d="M751.3,246.8 L754.8,249.75 L751.3,252.7Z" stroke="#111" stroke-width="0.5" fill="#111" />
<path d="M526.5,250.2 H535" stroke="#ff00ff" stroke-width="3" fill="none" />
<path d="M526.5,250.2 H535" stroke="#ffffff" stroke-width="1" fill="none" stroke-dasharray="2 2"/>
<text x="536.5" y="256.8" font-size="11" fill="#333333" textLength="22.5" lengthAdjust="spacingAndGlyphs"  stroke="#333333" stroke-width="0.22">Plot0</text>
<path d="M560,250.2 H580" stroke="#ff00ff" stroke-width="3" fill="none" />
<path d="M560,250.2 H580" stroke="#ffffff" stroke-width="1" fill="none" stroke-dasharray="2 2"/>
<rect x="580.3" y="247.1" width="25.5" height="6.9" fill="#fdfad2" stroke="#74745c" stroke-width="1" />
<rect x="582" y="248" width="5" height="5" fill="none" stroke="#333" stroke-width="0.7" />
<path d="M587,250.5 H593" stroke="#444" stroke-width="0.6" fill="none" />
<circle cx="590" cy="250.5" r="1.1" fill="#111"/>
<rect x="596" y="248" width="6" height="5" fill="none" stroke="#333" stroke-width="0.7" />
<path d="M606,250.2 H731" stroke="#ff00ff" stroke-width="4" fill="none" />
<path d="M606,250.2 H731" stroke="#ffffff" stroke-width="1.2" fill="none" stroke-dasharray="2.5 1.5"/>
<rect x="730.3" y="246.8" width="6" height="7" fill="#ff00ff" stroke="#7a3a7a" stroke-width="0.8" />
<path d="M736.3,250.2 H749" stroke="#ff00ff" stroke-width="3" fill="none" />
<path d="M736.3,250.2 H749" stroke="#ffffff" stroke-width="1" fill="none" stroke-dasharray="2 2"/>
<rect x="605.5" y="177.5" width="203.5" height="37.5" fill="#ffffe1" stroke="#444" stroke-width="1" />
<text x="606.6" y="187.8" font-size="10.5" fill="#222" textLength="101" lengthAdjust="spacingAndGlyphs"  stroke="#222" stroke-width="0.22">add this almost always</text>
<text x="606.6" y="200.3" font-size="10.5" fill="#222" textLength="200" lengthAdjust="spacingAndGlyphs"  stroke="#222" stroke-width="0.22">you need to add plots to one graph in future.</text>
<text x="606.6" y="212.8" font-size="10.5" fill="#222" textLength="62" lengthAdjust="spacingAndGlyphs"  stroke="#222" stroke-width="0.22">it will happen</text>
<path d="M663.75,216.75 L604,245" stroke="#222" stroke-width="1.3" fill="none" />
<path d="M602,246 L610,239.5 L611.5,244.5Z" stroke="#222" stroke-width="0.5" fill="#222" />
<rect x="482.7" y="301.3" width="26.3" height="25.3" fill="#fdfad2" stroke="#74745c" stroke-width="1" />
<rect x="486.8" y="308.6" width="6.8" height="9.7" fill="#3a3a3a" />
<rect x="487.7" y="309.5" width="2.0" height="2.0" fill="#ffffff" />
<rect x="490.59999999999997" y="309.5" width="2.0" height="2.0" fill="#ffffff" />
<rect x="487.7" y="312.4" width="2.0" height="2.0" fill="#ffffff" />
<rect x="490.59999999999997" y="312.4" width="2.0" height="2.0" fill="#ffffff" />
<rect x="487.7" y="315.3" width="2.0" height="2.0" fill="#ffffff" />
<rect x="490.59999999999997" y="315.3" width="2.0" height="2.0" fill="#ffffff" />
<rect x="485.2" y="307.0" width="6.8" height="9.7" fill="#3a3a3a" />
<rect x="486.09999999999997" y="307.9" width="2.0" height="2.0" fill="#ffffff" />
<rect x="488.99999999999994" y="307.9" width="2.0" height="2.0" fill="#ffffff" />
<rect x="486.09999999999997" y="310.79999999999995" width="2.0" height="2.0" fill="#ffffff" />
<rect x="488.99999999999994" y="310.79999999999995" width="2.0" height="2.0" fill="#ffffff" />
<rect x="486.09999999999997" y="313.7" width="2.0" height="2.0" fill="#ffffff" />
<rect x="488.99999999999994" y="313.7" width="2.0" height="2.0" fill="#ffffff" />
<rect x="499.0" y="302.90000000000003" width="6.5" height="6.8" fill="#8a8a70" stroke="#444" stroke-width="0.8" rx="0.8"/>
<rect x="500.5" y="304.70000000000005" width="3.2" height="3.6" fill="#e8e8d0" />
<path d="M505.5,303.90000000000003 Q507.7,306.3 505.5,308.90000000000003" stroke="#555" stroke-width="0.8" fill="none" />
<rect x="504.5" y="311.70000000000005" width="2.5" height="2.4" fill="#1a1a1a" />
<rect x="499.0" y="315.40000000000003" width="6.5" height="6.8" fill="#8a8a70" stroke="#444" stroke-width="0.8" rx="0.8"/>
<rect x="500.5" y="317.20000000000005" width="3.2" height="3.6" fill="#e8e8d0" />
<path d="M505.5,316.40000000000003 Q507.7,318.8 505.5,321.40000000000003" stroke="#555" stroke-width="0.8" fill="none" />
<rect x="504.5" y="324.20000000000005" width="2.5" height="2.4" fill="#1a1a1a" />
<rect x="482.7" y="372.5" width="26.3" height="25.3" fill="#fdfad2" stroke="#74745c" stroke-width="1" />
<rect x="486.8" y="379.8" width="6.8" height="9.7" fill="#3a3a3a" />
<rect x="487.7" y="380.7" width="2.0" height="2.0" fill="#ffffff" />
<rect x="490.59999999999997" y="380.7" width="2.0" height="2.0" fill="#ffffff" />
<rect x="487.7" y="383.59999999999997" width="2.0" height="2.0" fill="#ffffff" />
<rect x="490.59999999999997" y="383.59999999999997" width="2.0" height="2.0" fill="#ffffff" />
<rect x="487.7" y="386.5" width="2.0" height="2.0" fill="#ffffff" />
<rect x="490.59999999999997" y="386.5" width="2.0" height="2.0" fill="#ffffff" />
<rect x="485.2" y="378.2" width="6.8" height="9.7" fill="#3a3a3a" />
<rect x="486.09999999999997" y="379.09999999999997" width="2.0" height="2.0" fill="#ffffff" />
<rect x="488.99999999999994" y="379.09999999999997" width="2.0" height="2.0" fill="#ffffff" />
<rect x="486.09999999999997" y="381.99999999999994" width="2.0" height="2.0" fill="#ffffff" />
<rect x="488.99999999999994" y="381.99999999999994" width="2.0" height="2.0" fill="#ffffff" />
<rect x="486.09999999999997" y="384.9" width="2.0" height="2.0" fill="#ffffff" />
<rect x="488.99999999999994" y="384.9" width="2.0" height="2.0" fill="#ffffff" />
<rect x="499.0" y="374.1" width="6.5" height="6.8" fill="#8a8a70" stroke="#444" stroke-width="0.8" rx="0.8"/>
<rect x="500.5" y="375.90000000000003" width="3.2" height="3.6" fill="#e8e8d0" />
<path d="M505.5,375.1 Q507.7,377.5 505.5,380.1" stroke="#555" stroke-width="0.8" fill="none" />
<rect x="504.5" y="382.90000000000003" width="2.5" height="2.4" fill="#1a1a1a" />
<rect x="499.0" y="386.6" width="6.5" height="6.8" fill="#8a8a70" stroke="#444" stroke-width="0.8" rx="0.8"/>
<rect x="500.5" y="388.40000000000003" width="3.2" height="3.6" fill="#e8e8d0" />
<path d="M505.5,387.6 Q507.7,390.0 505.5,392.6" stroke="#555" stroke-width="0.8" fill="none" />
<rect x="504.5" y="395.40000000000003" width="2.5" height="2.4" fill="#1a1a1a" />
<path d="M509.5,304.6 H523" stroke="#ff9e50" stroke-width="1.2" fill="none" />
<path d="M509.5,317.8 H537" stroke="#ff9e50" stroke-width="1.2" fill="none" />
<path d="M540.8,307.2 H582" stroke="#ff9e50" stroke-width="1.2" fill="none" />
<path d="M554,320.4 H582" stroke="#ff9e50" stroke-width="1.2" fill="none" />
<path d="M523.3000000000001,299.2 L540.1999999999999,307.2 L523.3000000000001,315.2 Z" stroke="#666655" stroke-width="1.4" fill="#fdfad2" stroke-linejoin="round"/>
<rect x="526.1" y="306.59999999999997" width="4" height="1.3" fill="#1a1a1a" />
<rect x="527.45" y="305.2" width="1.3" height="4" fill="#1a1a1a" />
<rect x="530.9000000000001" y="303.9" width="1.6" height="6.6" fill="#1a1a1a" />
<path d="M531.1,304.2 L529.6,305.59999999999997" stroke="#1a1a1a" stroke-width="1.1" fill="none" />
<path d="M537.0,311.8 L553.4,319.8 L537.0,327.8 Z" stroke="#666655" stroke-width="1.4" fill="#fdfad2" stroke-linejoin="round"/>
<rect x="539.8" y="319.5" width="3.4" height="1.2" fill="#1a1a1a" />
<rect x="544.6" y="316.5" width="1.6" height="6.6" fill="#1a1a1a" />
<path d="M544.8,316.8 L543.3,318.2" stroke="#1a1a1a" stroke-width="1.1" fill="none" />
<path d="M509.5,376 H523" stroke="#ff9e50" stroke-width="1.2" fill="none" />
<path d="M509.5,389.5 H548" stroke="#ff9e50" stroke-width="1.2" fill="none" />
<path d="M540.8,378.4 H582" stroke="#ff9e50" stroke-width="1.2" fill="none" />
<path d="M565,390.2 H582" stroke="#ff9e50" stroke-width="1.2" fill="none" />
<path d="M523.3000000000001,370.40000000000003 L540.1999999999999,378.4 L523.3000000000001,386.4 Z" stroke="#666655" stroke-width="1.4" fill="#fdfad2" stroke-linejoin="round"/>
<rect x="526.1" y="377.79999999999995" width="4" height="1.3" fill="#1a1a1a" />
<rect x="527.45" y="376.4" width="1.3" height="4" fill="#1a1a1a" />
<rect x="530.9000000000001" y="375.09999999999997" width="1.6" height="6.6" fill="#1a1a1a" />
<path d="M531.1,375.4 L529.6,376.79999999999995" stroke="#1a1a1a" stroke-width="1.1" fill="none" />
<path d="M548.2,382.1 L564.4,390.15 L548.2,398.2 Z" stroke="#666655" stroke-width="1.4" fill="#fdfad2" stroke-linejoin="round"/>
<rect x="551.0" y="389.84999999999997" width="3.4" height="1.2" fill="#1a1a1a" />
<rect x="555.8000000000001" y="386.84999999999997" width="1.6" height="6.6" fill="#1a1a1a" />
<path d="M556.0,387.15 L554.5,388.54999999999995" stroke="#1a1a1a" stroke-width="1.1" fill="none" />
<text x="582" y="288" font-size="11" fill="#333333" textLength="50" lengthAdjust="spacingAndGlyphs"  stroke="#333333" stroke-width="0.22">XY Graph-x</text>
<rect x="582.5" y="292.5" width="82.4" height="7" fill="#fdfad2" stroke="#606060" stroke-width="1" />
<rect x="593" y="294" width="61.400000000000006" height="4" fill="#ff00ff" />
<rect x="585" y="293.5" width="1" height="3.5" fill="#1a1a1a" />
<rect x="587" y="293.5" width="1" height="3.5" fill="#1a1a1a" />
<rect x="585" y="297.5" width="1" height="1.0" fill="#1a1a1a" />
<rect x="587" y="297.5" width="1" height="1.0" fill="#1a1a1a" />
<rect x="658.4" y="293.5" width="1" height="3.5" fill="#1a1a1a" />
<rect x="660.4" y="293.5" width="1" height="3.5" fill="#1a1a1a" />
<rect x="658.4" y="297.5" width="1" height="1.0" fill="#1a1a1a" />
<rect x="660.4" y="297.5" width="1" height="1.0" fill="#1a1a1a" />
<rect x="582.5" y="299.3" width="82.4" height="14.5" fill="#ffffff" stroke="#707070" stroke-width="1" />
<path d="M585,303.8 L588,306.55 L585,309.3Z" stroke="#111" stroke-width="0.5" fill="#111" />
<text x="624.9000000000001" y="310.6" font-size="10.5" fill="#ff8000" textLength="76" lengthAdjust="spacingAndGlyphs" text-anchor="middle"  stroke="#ff8000" stroke-width="0.22">XScale.Maximum</text>
<rect x="582.5" y="313.8" width="82.4" height="14.5" fill="#ffffff" stroke="#707070" stroke-width="1" />
<path d="M585,318.3 L588,321.05 L585,323.8Z" stroke="#111" stroke-width="0.5" fill="#111" />
<text x="624.9000000000001" y="325.1" font-size="10.5" fill="#ff8000" textLength="76" lengthAdjust="spacingAndGlyphs" text-anchor="middle"  stroke="#ff8000" stroke-width="0.22">XScale.Minimum</text>
<rect x="582.5" y="328.3" width="82.4" height="14.5" fill="#ffffff" stroke="#707070" stroke-width="1" />
<path d="M585,332.8 L588,335.55 L585,338.3Z" stroke="#111" stroke-width="0.5" fill="#111" />
<text x="624.9000000000001" y="339.6" font-size="10.5" fill="#3838e0" textLength="65" lengthAdjust="spacingAndGlyphs" text-anchor="middle"  stroke="#3838e0" stroke-width="0.22">XScale.ScaleFit</text>
<text x="582" y="358" font-size="11" fill="#333333" textLength="50" lengthAdjust="spacingAndGlyphs"  stroke="#333333" stroke-width="0.22">XY Graph-y</text>
<rect x="582.5" y="362.5" width="82.4" height="7" fill="#fdfad2" stroke="#606060" stroke-width="1" />
<rect x="593" y="364" width="61.400000000000006" height="4" fill="#ff00ff" />
<rect x="585" y="363.5" width="1" height="3.5" fill="#1a1a1a" />
<rect x="587" y="363.5" width="1" height="3.5" fill="#1a1a1a" />
<rect x="585" y="367.5" width="1" height="1.0" fill="#1a1a1a" />
<rect x="587" y="367.5" width="1" height="1.0" fill="#1a1a1a" />
<rect x="658.4" y="363.5" width="1" height="3.5" fill="#1a1a1a" />
<rect x="660.4" y="363.5" width="1" height="3.5" fill="#1a1a1a" />
<rect x="658.4" y="367.5" width="1" height="1.0" fill="#1a1a1a" />
<rect x="660.4" y="367.5" width="1" height="1.0" fill="#1a1a1a" />
<rect x="582.5" y="369.3" width="82.4" height="14.5" fill="#ffffff" stroke="#707070" stroke-width="1" />
<path d="M585,373.8 L588,376.55 L585,379.3Z" stroke="#111" stroke-width="0.5" fill="#111" />
<text x="624.9000000000001" y="380.6" font-size="10.5" fill="#ff8000" textLength="76" lengthAdjust="spacingAndGlyphs" text-anchor="middle"  stroke="#ff8000" stroke-width="0.22">YScale.Maximum</text>
<rect x="582.5" y="383.8" width="82.4" height="14.5" fill="#ffffff" stroke="#707070" stroke-width="1" />
<path d="M585,388.3 L588,391.05 L585,393.8Z" stroke="#111" stroke-width="0.5" fill="#111" />
<text x="624.9000000000001" y="395.1" font-size="10.5" fill="#ff8000" textLength="75" lengthAdjust="spacingAndGlyphs" text-anchor="middle"  stroke="#ff8000" stroke-width="0.22">YScale.Minimum</text>
<rect x="582.5" y="398.3" width="82.4" height="14.5" fill="#ffffff" stroke="#707070" stroke-width="1" />
<path d="M585,402.8 L588,405.55 L585,408.3Z" stroke="#111" stroke-width="0.5" fill="#111" />
<text x="624.9000000000001" y="409.6" font-size="10.5" fill="#3838e0" textLength="65" lengthAdjust="spacingAndGlyphs" text-anchor="middle"  stroke="#3838e0" stroke-width="0.22">YScale.ScaleFit</text>
<rect x="545.2" y="340.9" width="8.8" height="13.9" fill="#ffffff" stroke="#1a1aff" stroke-width="2" />
<text x="549.6" y="352.59999999999997" font-size="10" fill="#555" text-anchor="middle"  stroke="#555" stroke-width="0.22">0</text>
<path d="M554.6,348 H570.7" stroke="#3838e0" stroke-width="1.2" fill="none" />
<path d="M582,335 H570.7 V405.4 H582" stroke="#3838e0" stroke-width="1.2" fill="none" />
<circle cx="570.7" cy="348" r="2.3" fill="#3030f0"/>
<text x="506" y="457.5" font-size="11" fill="#333333" textLength="168" lengthAdjust="spacingAndGlyphs"  stroke="#333333" stroke-width="0.22">XY Graph (Simulation - Not Real Data)</text>
<rect x="506.5" y="462.0" width="43" height="7" fill="#fdfad2" stroke="#606060" stroke-width="1" />
<rect x="517" y="463.5" width="22" height="4" fill="#ff00ff" />
<rect x="509" y="463.0" width="1" height="3.5" fill="#1a1a1a" />
<rect x="511" y="463.0" width="1" height="3.5" fill="#1a1a1a" />
<rect x="509" y="467.0" width="1" height="1.0" fill="#1a1a1a" />
<rect x="511" y="467.0" width="1" height="1.0" fill="#1a1a1a" />
<rect x="543" y="463.0" width="1" height="3.5" fill="#1a1a1a" />
<rect x="545" y="463.0" width="1" height="3.5" fill="#1a1a1a" />
<rect x="543" y="467.0" width="1" height="1.0" fill="#1a1a1a" />
<rect x="545" y="467.0" width="1" height="1.0" fill="#1a1a1a" />
<rect x="506.5" y="468.8" width="43" height="14.5" fill="#ffffff" stroke="#707070" stroke-width="1" />
<path d="M509,473.3 L512,476.05 L509,478.8Z" stroke="#111" stroke-width="0.5" fill="#111" />
<text x="529.2" y="480.1" font-size="10.5" fill="#ff00ff" textLength="37" lengthAdjust="spacingAndGlyphs" text-anchor="middle"  stroke="#ff00ff" stroke-width="0.22">AnntList</text>
<path d="M665.4,295.5 H686" stroke="#6a6a10" stroke-width="3" fill="none" />
<path d="M665.4,295.5 H686" stroke="#f0f000" stroke-width="1" fill="none" stroke-dasharray="1.5 1.5"/>
<path d="M665,364 H674 V302 H686" stroke="#6a6a10" stroke-width="3" fill="none" />
<path d="M665,364 H674 V302 H686" stroke="#f0f000" stroke-width="1" fill="none" stroke-dasharray="1.5 1.5"/>
<path d="M550,464 H683 V308 H686" stroke="#6a6a10" stroke-width="3" fill="none" />
<path d="M550,464 H683 V308 H686" stroke="#f0f000" stroke-width="1" fill="none" stroke-dasharray="1.5 1.5"/>
<rect x="686.4" y="291.0" width="26.1" height="21" fill="#fdfad2" stroke="#74745c" stroke-width="1" />
<path d="M703.4,291 V312" stroke="#555" stroke-width="1" fill="none" />
<rect x="689" y="293.5" width="1" height="3.5" fill="#1a1a1a" />
<rect x="691" y="293.5" width="1" height="3.5" fill="#1a1a1a" />
<rect x="689" y="297.5" width="1" height="1.0" fill="#1a1a1a" />
<rect x="691" y="297.5" width="1" height="1.0" fill="#1a1a1a" />
<path d="M694.5,295.3 H698" stroke="#111" stroke-width="1.2" fill="none" />
<path d="M697,293.3 L700,295.3 L697,297.3Z" stroke="#111" stroke-width="0.4" fill="#111" />
<rect x="689" y="300.1" width="1" height="3.5" fill="#1a1a1a" />
<rect x="691" y="300.1" width="1" height="3.5" fill="#1a1a1a" />
<rect x="689" y="304.1" width="1" height="1.0" fill="#1a1a1a" />
<rect x="691" y="304.1" width="1" height="1.0" fill="#1a1a1a" />
<path d="M694.5,302.0 H698" stroke="#111" stroke-width="1.2" fill="none" />
<path d="M697,300.0 L700,302.0 L697,304.0Z" stroke="#111" stroke-width="0.4" fill="#111" />
<rect x="689" y="306.7" width="1" height="3.5" fill="#1a1a1a" />
<rect x="691" y="306.7" width="1" height="3.5" fill="#1a1a1a" />
<rect x="689" y="310.7" width="1" height="1.0" fill="#1a1a1a" />
<rect x="691" y="310.7" width="1" height="1.0" fill="#1a1a1a" />
<path d="M694.5,308.7 H698" stroke="#111" stroke-width="1.2" fill="none" />
<path d="M697,306.7 L700,308.7 L697,310.7Z" stroke="#111" stroke-width="0.4" fill="#111" />
<rect x="706.5" y="298.5" width="1" height="3.5" fill="#1a1a1a" />
<rect x="708.5" y="298.5" width="1" height="3.5" fill="#1a1a1a" />
<rect x="706.5" y="302.5" width="1" height="1.0" fill="#1a1a1a" />
<rect x="708.5" y="302.5" width="1" height="1.0" fill="#1a1a1a" />
<path d="M713,301.4 H731" stroke="#6a6a10" stroke-width="3" fill="none" />
<path d="M713,301.4 H731" stroke="#f0f000" stroke-width="1" fill="none" stroke-dasharray="1.5 1.5"/>
<rect x="730" y="298.5" width="6.5" height="7" fill="#7a7a20" stroke="#4a4a10" stroke-width="0.6" />
<rect x="775.5" y="518" width="17.5" height="14" fill="#ffffe1" stroke="#333" stroke-width="1" />
<text x="784.3" y="529" font-size="10.5" fill="#222" text-anchor="middle"  stroke="#222" stroke-width="0.22">AC</text>
</g>
</svg>
</body></html>
